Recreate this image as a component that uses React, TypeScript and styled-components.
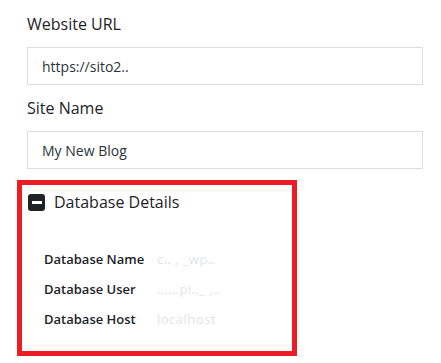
import styled, { createGlobalStyle } from 'styled-components';

const GlobalStyle = createGlobalStyle`
  body {
    margin: 0;
    background: #fff;
    font-family: "Open Sans", "Noto Sans", sans-serif;
    color: #1d2327;
  }
`;

const fields = [
  { label: 'Website URL', value: 'https://sito2..' },
  { label: 'Site Name', value: 'My New Blog' },
];

const dbDetails = [
  { label: 'Database Name', value: 'c‥ ‚  _wp‥' },
  { label: 'Database User', value: '‥‥‥pi‥_ ‚‥' },
  { label: 'Database Host', value: 'localhost' },
];

const App = () => {
  return (
    <Page>
      <GlobalStyle />
      {fields.map((field) => (
        <Field key={field.label}>
          <Label>{field.label}</Label>
          <TextBox>{field.value}</TextBox>
        </Field>
      ))}
      <Highlight>
        <SectionHeader>
          <ToggleIcon />
          <SectionTitle>Database Details</SectionTitle>
        </SectionHeader>
        <DetailsGrid>
          {dbDetails.map((row) => (
            <DetailRow key={row.label}>
              <DetailLabel>{row.label}</DetailLabel>
              <DetailValue>{row.value}</DetailValue>
            </DetailRow>
          ))}
        </DetailsGrid>
      </Highlight>
    </Page>
  );
};

const Page = styled.div`
  width: 441px;
  height: 363px;
  box-sizing: border-box;
  padding: 12px 18px 0 27px;
  overflow: hidden;
`;

const Field = styled.div`
  display: flex;
  flex-direction: column;
  margin-bottom: 11px;
`;

const Label = styled.div`
  font-size: 16px;
  line-height: 24px;
  margin-bottom: 11px;
`;

const TextBox = styled.div`
  height: 38px;
  box-sizing: border-box;
  border: 1px solid #dcdcde;
  padding: 0 14px;
  display: flex;
  align-items: center;
  font-size: 14px;
  color: #2c3338;
`;

const Highlight = styled.div`
  margin: 2px 0 0 -10px;
  width: 280px;
  height: 176px;
  box-sizing: border-box;
  border: 5px solid #ed1c24;
  padding: 7px 6px 0;
`;

const SectionHeader = styled.div`
  display: flex;
  align-items: center;
  gap: 9px;
`;

const ToggleIcon = styled.span`
  width: 17px;
  height: 17px;
  border-radius: 3px;
  background: #1d2327;
  display: flex;
  align-items: center;
  justify-content: center;

  &::after {
    content: '';
    width: 10px;
    height: 3px;
    background: #fff;
  }
`;

const SectionTitle = styled.div`
  font-size: 16px;
  line-height: 20px;
`;

const DetailsGrid = styled.div`
  display: flex;
  flex-direction: column;
  gap: 10px;
  padding: 37px 0 0 16px;
`;

const DetailRow = styled.div`
  display: grid;
  grid-template-columns: 113px auto;
  align-items: baseline;
  height: 20px;
`;

const DetailLabel = styled.div`
  font-size: 13px;
  font-weight: 600;
  line-height: 20px;
`;

const DetailValue = styled.div`
  font-size: 13px;
  color: #e2e4e8;
  letter-spacing: 0.5px;
`;

export default App;
